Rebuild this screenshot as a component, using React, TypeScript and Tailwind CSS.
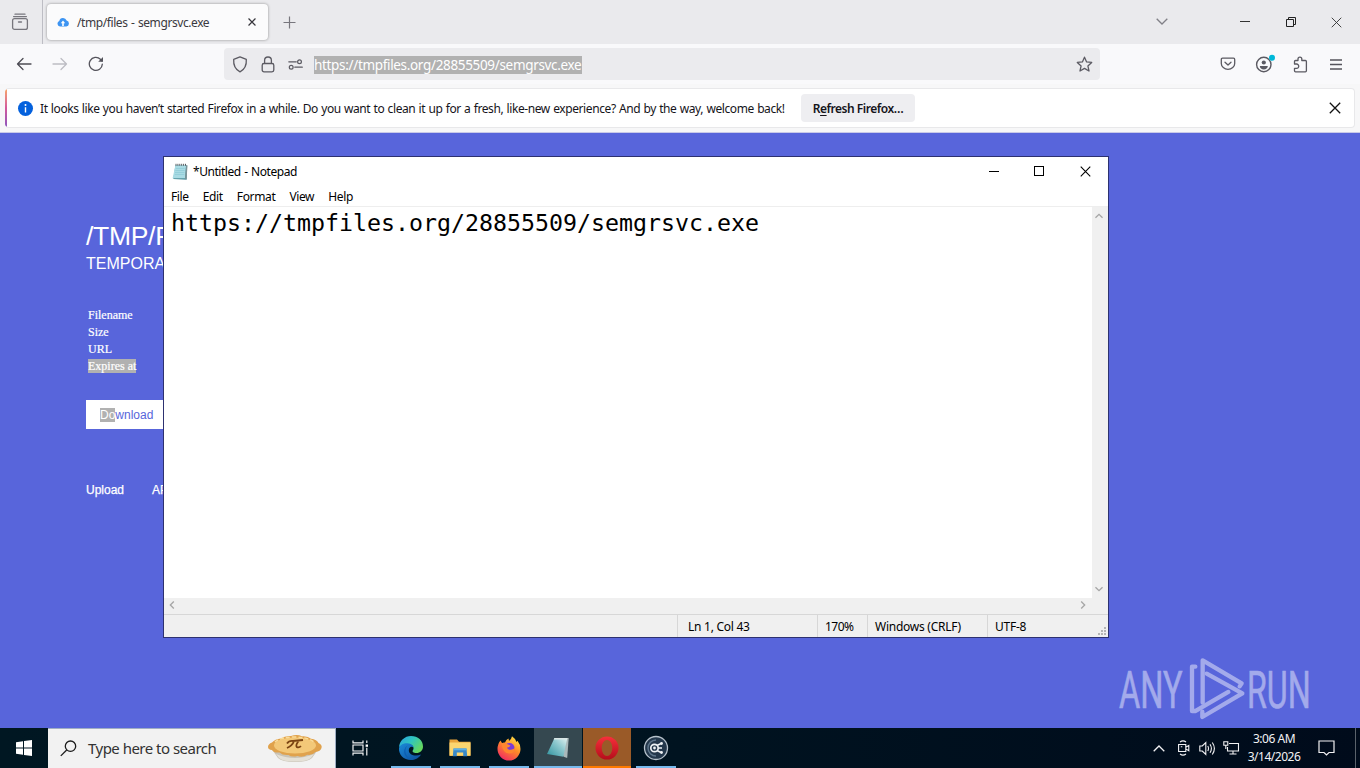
import React from 'react';

type IconProps = {
    className?: string;
};

type TaskProps = {
    children: React.ReactNode;
    className?: string;
    line?: string;
};

const menuItems = ['File', 'Edit', 'Format', 'View', 'Help'];
const fileRows = ['Filename', 'Size', 'URL'];

/* ---------- browser icons ---------- */

const FirefoxView = () => (
    <svg width="18" height="18" viewBox="0 0 18 18" fill="none" stroke="#77767d" strokeWidth="1.3" strokeLinecap="round">
        <path d="M4 1.2h10M2.6 3.6h12.8" />
        <rect x="1.6" y="5.6" width="14.8" height="10.8" rx="2" />
        <path d="M7.5 9h3" />
    </svg>
);

const CloudUp = () => (
    <svg width="12" height="10" viewBox="0 0 12 10">
        <path d="M3 9.5a2.8 2.8 0 0 1-.7-5.4A3.8 3.8 0 0 1 9.6 3.6 3 3 0 0 1 9.3 9.5z" fill="#3d94f2" />
        <path d="M6 3.6 8.2 6.2H6.8V9H5.2V6.2H3.8z" fill="#fff" />
    </svg>
);

const Cross = ({ className }: IconProps) => (
    <svg className={className} viewBox="0 0 12 12" fill="none" stroke="currentColor">
        <path d="M.8.8l10.4 10.4M11.2.8.8 11.2" />
    </svg>
);

const Arrow = ({ className }: IconProps) => (
    <svg className={className} width="16" height="14" viewBox="0 0 16 14" fill="none" stroke="currentColor" strokeWidth="1.3" strokeLinecap="round" strokeLinejoin="round">
        <path d="M15 7H1.5M7 1.5 1.5 7 7 12.5" />
    </svg>
);

const Reload = () => (
    <svg width="16" height="16" viewBox="0 0 16 16" fill="none" stroke="#55545c" strokeWidth="1.3" strokeLinecap="round">
        <path d="M14.3 8.2A6.5 6.5 0 1 1 12.4 3.3L14 5" />
        <path d="M15 1v4.8h-4.8z" fill="#55545c" stroke="none" />
    </svg>
);

const Shield = () => (
    <svg width="16" height="17" viewBox="0 0 16 17" fill="none" stroke="#5b5a62" strokeWidth="1.3" strokeLinejoin="round">
        <path d="M8 .9 14.3 3.3c.4 5.5-1.3 10-6.3 12.6C3 13.3 1.3 8.8 1.7 3.3z" />
    </svg>
);

const Lock = () => (
    <svg width="14" height="17" viewBox="0 0 14 17" fill="none" stroke="#5b5a62" strokeWidth="1.3">
        <path d="M3.6 7.5V4.4a3.4 3.4 0 0 1 6.8 0V7.5" />
        <rect x="1.2" y="7.5" width="11.6" height="8.3" rx="1.8" />
    </svg>
);

const Permissions = () => (
    <svg width="15" height="11" viewBox="0 0 15 11" fill="none" stroke="#5b5a62" strokeWidth="1.2" strokeLinecap="round">
        <path d="M.8 2.8h7.5M6.8 8.2h7.5" />
        <circle cx="11.5" cy="2.8" r="1.9" />
        <circle cx="3.2" cy="8.2" r="1.9" />
    </svg>
);

const Star = () => (
    <svg width="17" height="17" viewBox="0 0 17 17" fill="none" stroke="#5b5a62" strokeWidth="1.3" strokeLinejoin="round">
        <path d="M8.5 1.2 10.6 5.9 15.7 6.4 11.9 9.9 13 15 8.5 12.4 4 15 5.1 9.9 1.3 6.4 6.4 5.9z" />
    </svg>
);

const Pocket = () => (
    <svg width="16" height="14" viewBox="0 0 16 14" fill="none" stroke="#5b5a62" strokeWidth="1.3" strokeLinecap="round" strokeLinejoin="round">
        <path d="M2.5 1.2h11c.7 0 1.2.5 1.2 1.2v4a6.7 5.9 0 0 1-13.4 0v-4c0-.7.5-1.2 1.2-1.2z" />
        <path d="M5 5.2 8 8l3-2.8" />
    </svg>
);

const Account = () => (
    <svg width="20" height="20" viewBox="0 0 20 20">
        <circle cx="8.8" cy="10.5" r="7.2" fill="none" stroke="#5b5a62" strokeWidth="1.4" />
        <circle cx="8.8" cy="8.5" r="2.1" fill="#5b5a62" />
        <path d="M4.8 12.1h8c0 2.3-1.9 3.4-4 3.4s-4-1.1-4-3.4z" fill="#5b5a62" />
        <circle cx="17" cy="3.7" r="3" fill="#00b8d9" />
    </svg>
);

const Extension = () => (
    <svg width="15" height="17" viewBox="0 0 15 17" fill="none" stroke="#5b5a62" strokeWidth="1.3" strokeLinejoin="round">
        <path d="M1.5 8V5.5c0-.6.4-1 1-1H5V3a1.9 1.9 0 0 1 3.8 0v1.5h3.6c.6 0 1 .4 1 1v9.3c0 .6-.4 1-1 1H2.5c-.6 0-1-.4-1-1v-2.5H3.6a1.9 1.9 0 0 0 0-4.3z" />
    </svg>
);

const Chevron = ({ className }: IconProps) => (
    <svg className={className} viewBox="0 0 12 7" fill="none" stroke="currentColor">
        <path d="M.7.8 6 6l5.3-5.2" />
    </svg>
);

const NotepadIcon = () => (
    <svg width="16" height="18" viewBox="0 0 16 18">
        <path d="M3.4 2.5h11.8l-.6 14.3-13.3-.9z" fill="#4e8f9b" />
        <path d="M3.4 2.2h10.700L13 15.2H.6z" fill="#a9dbe4" />
        <path d="M3.8 5.5h9M3.4 7.5h9.200M3 9.5h9.400M2.800 11.5h9.400" stroke="#8ccad6" strokeWidth=".7" />
        <path d="M14.1 2.2h1.3l-.7 14.4-1.7-1.2z" fill="#7c9398" />
        <path d="M4 .8v2M5.900.8v2M7.800.8v2M9.700.8v2M11.600.8v2M13.500.8v2" stroke="#464c50" strokeWidth=".9" />
    </svg>
);

/* ---------- watermark ---------- */

const AnyRun = () => (
    <svg width="204" height="66" viewBox="0 0 204 66" fill="none" opacity=".58">
        <g fill="#d9dcf8" stroke="#d9dcf8" strokeWidth=".6" fontFamily="Roboto, sans-serif" fontSize="52">
            <text transform="translate(2 53) scale(.625 1)">ANY</text>
            <text transform="translate(130 53) scale(.62 1)">RUN</text>
        </g>
        <g transform="translate(63 -5) scale(.3333)" stroke="#d9dcf8" strokeWidth="13" strokeLinejoin="round" strokeLinecap="round">
            <path d="M46 50H36v133h11l98-57" />
            <path d="M68 158V31l117 69-6 9" />
            <path d="M80 71l107 59-120 71v-16" />
        </g>
    </svg>
);

/* ---------- taskbar icons ---------- */

const Pie = () => (
    <svg width="56" height="30" viewBox="0 0 56 30">
        <path d="M4 14 11 24q4 4 17 4t17-4l7-10z" fill="#c9c3b6" />
        <path d="M9 20q19 8 38 0l-3 4q-4 3.5-16 3.5T12 24z" fill="#e4e0d6" />
        <path d="M1 13q0-3 4-4.5Q8 5 14 4.5 18 1.5 24 2q6-2 11 .2 6-.5 9 2.5 6 .8 7.5 4.3 4 2 3 5-1 3.5-6 4-3 3.5-8 2.8-5 3-10 1.2-6 1.5-9-1-6 .5-9-2.5-6 .5-7.5-2.5-4-.5-4-3z" fill="#e0a24c" />
        <ellipse cx="28" cy="11.5" rx="21" ry="8" fill="#f3c878" />
        <path d="M8 8q6-5 19-5 14 0 20 5" stroke="#f9dc9b" strokeWidth="1.5" fill="none" strokeDasharray="4 2" />
        <path d="M20 9.5q2-3 6-2.5l10-1M27 7q-1.5 4.500-7 7M32 6.500q-4 5-2 6.700 2 .8 4-1" stroke="#7a4312" strokeWidth="1.8" fill="none" />
    </svg>
);

const TaskView = () => (
    <svg width="17" height="16" viewBox="0 0 17 16" fill="none" stroke="#f0f2f3" strokeWidth="1.2">
        <path d="M1 .5v2.4h10V.5M1 15.5v-2.4h10v2.4M1 5h10v6H1zM14.8.5v2.5M14.8 7.8v7.7" />
        <path d="M13.6 4.5h2.4v2.3h-2.4z" fill="#fff" stroke="none" />
    </svg>
);

const Edge = () => (
    <svg width="26" height="26" viewBox="0 0 26 26">
        <defs>
            <linearGradient id="edgeTop" x1="0" y1="0" x2="1" y2=".6">
                <stop offset="0" stopColor="#299ee2" />
                <stop offset=".5" stopColor="#2fc5c0" />
                <stop offset="1" stopColor="#66d85d" />
            </linearGradient>
            <linearGradient id="edgeLow" x1="0" y1="0" x2="1" y2="1">
                <stop offset="0" stopColor="#1b8bd9" />
                <stop offset="1" stopColor="#0d4c9a" />
            </linearGradient>
        </defs>
        <path d="M1 12.5A12 12 0 0 1 13 1c7 0 12 4.5 12 10.5 0 4-3 6.5-6.5 6.5-3 0-4.7-1.2-3.6-2.7C17 12.5 14 9 9.5 9 5 9 1.5 11.5 1 12.5z" fill="url(#edgeTop)" />
        <path d="M1 13C2 9.7 5.5 8 9.5 8.2c4 .3 6 2.3 6 4.3-2-1.5-4.7-.3-4.7 2.7 0 4.5 6.2 6.8 12.2 4.3C20.5 23.5 17 25 13 25 5.500 25 .5 19.500 1 13z" fill="url(#edgeLow)" />
        <path d="M9.5 10.5c-4 4-2 12 4 14.2C6 23 3.5 14.5 9.5 10.5z" fill="#0b5eb3" />
    </svg>
);

const Explorer = () => (
    <svg width="22" height="20" viewBox="0 0 22 20">
        <path d="M.5 1.5h7.5l2 2.3h11.5V18H.5z" fill="#e9a43a" />
        <path d="M.5 4.5h21v13H.5z" fill="#fcd670" />
        <path d="M4.5 10.500h13l.7 7.800h-4v-3.800H7.800v3.800h-4z" fill="#3989c9" />
        <path d="M4.500 10.500h13v1.800h-13z" fill="#5eb0e5" />
    </svg>
);

const Firefox = () => (
    <svg width="24" height="25" viewBox="0 0 24 25">
        <defs>
            <linearGradient id="fox" x1=".8" y1="0" x2=".2" y2="1">
                <stop offset="0" stopColor="#ffe546" />
                <stop offset=".45" stopColor="#ff8a28" />
                <stop offset="1" stopColor="#f02466" />
            </linearGradient>
        </defs>
        <path d="M3.5 4.5 5 7l3-.6Q9 3.5 11.5 2.5L12 5q2.5-2 3-4.8Q19 3 19.5 6l1-1.2Q23.5 8.5 23.5 13A11.5 11.5 0 0 1 .5 13Q.5 8 3.5 4.5z" fill="url(#fox)" />
        <circle cx="12.5" cy="12" r="5" fill="#7a3ad6" />
        <path d="M4.5 7.5q3-1.5 5.5.5l3.5 1.5q-1 2-3.5 2 .5 2.5 4 2.3 3-.3 4-2.3 0 6-5.5 6Q5.5 17.5 4.5 7.5z" fill="#ff862f" />
    </svg>
);

const NotepadTask = () => (
    <svg width="24" height="22" viewBox="0 0 24 22">
        <defs>
            <linearGradient id="pad" x1="0" y1="1" x2="1" y2="0">
                <stop offset="0" stopColor="#2d929d" />
                <stop offset=".6" stopColor="#8fc9cf" />
                <stop offset="1" stopColor="#e4f2f1" />
            </linearGradient>
        </defs>
        <path d="M8.5 1h14.2l-1.5 20-3.5-1.2z" fill="#a9b8ba" />
        <path d="M8.5 1h12.8l-4 18.8L1 17z" fill="url(#pad)" />
        <path d="M8.5 1h12.8l-.3 1.5H7.7z" fill="#d9e5e5" />
    </svg>
);

const Opera = () => (
    <svg width="24" height="24" viewBox="0 0 24 24">
        <defs>
            <linearGradient id="opera" x1="0" y1="0" x2="0" y2="1">
                <stop offset="0" stopColor="#f6303b" />
                <stop offset="1" stopColor="#b40d1a" />
            </linearGradient>
        </defs>
        <path fillRule="evenodd" d="M12 .5a11.5 11.5 0 1 1 0 23 11.5 11.5 0 0 1 0-23zM12 4a5.300 8 0 1 0 0 16 5.300 8 0 0 0 0-16z" fill="url(#opera)" />
    </svg>
);

const RoundApp = () => (
    <svg width="26" height="26" viewBox="0 0 26 26" fill="none">
        <circle cx="13" cy="13" r="11.5" fill="#24384c" stroke="#b7c2cc" strokeWidth="1.3" />
        <path d="M13 5a8 8 0 0 0-8 8 8 8 0 0 0 8 8" stroke="#5d748a" strokeWidth="1.5" />
        <circle cx="11.5" cy="13" r="3.7" stroke="#eef2f5" strokeWidth="1.7" />
        <circle cx="11.5" cy="13" r="1.4" fill="#eef2f5" />
        <path d="M14 10.5 18 8.5M14 15.5l4 2M15.5 13H19" stroke="#eef2f5" strokeWidth="1.4" />
        <circle cx="18.5" cy="8.5" r="1.4" fill="#eef2f5" />
        <circle cx="18.5" cy="17.5" r="1.4" fill="#eef2f5" />
    </svg>
);

const Task = ({ children, className = 'w-12', line = 'bg-[#76b9ed]' }: TaskProps) => (
    <div className={`flex h-10 flex-col items-center ${className}`}>
        <div className="flex h-[38px] items-center pt-[2px]">{children}</div>
        <div className={`h-[2px] w-full ${line}`}></div>
    </div>
);

/* ---------- sections ---------- */

const TabBar = () => (
    <div className="flex h-11 shrink-0 bg-[#eaeaed] text-[#5b5b66]">
        <div className="flex w-[43px] items-center border-r border-[#bdbdc4] pl-[11px]">
            <FirefoxView />
        </div>
        <div className="mt-1 ml-1 flex h-9 w-[221px] items-center rounded bg-[#fbfbfc] pl-[10px] shadow-[0_0_3px_rgba(0,0,0,0.4)]">
            <CloudUp />
            <span className="mt-[2px] ml-[8px] w-[171px] text-[12px] tracking-[-0.42px] whitespace-nowrap text-[#3a3940] [word-spacing:0.8px]">/tmp/files - semgrsvc.exe</span>
            <Cross className="h-2 w-2 stroke-[1.8] text-[#36353c]" />
        </div>
        <svg className="mt-4 ml-[15px]" width="13" height="13" viewBox="0 0 13 13" stroke="#77767d" strokeWidth="1.2">
            <path d="M6.5.5v12M.5 6.5h12" />
        </svg>
        <Chevron className="mt-[18px] ml-[860px] h-[7px] w-3 stroke-[1.3] text-[#818087]" />
        <div className="mt-[21px] ml-[72px] h-px w-[10px] bg-[#333]"></div>
        <svg className="mt-[17px] ml-9" width="11" height="11" viewBox="0 0 11 11" fill="none" stroke="#222">
            <path d="M.5 2.5h7v7h-7zM2.5 2.5v-2h7v7h-2" />
        </svg>
        <Cross className="mt-[17px] ml-[34px] h-[11px] w-[11px] text-[#333]" />
    </div>
);

const NavBar = () => (
    <div className="flex h-10 shrink-0 items-center bg-[#f9f9fb]">
        <Arrow className="ml-4 text-[#4d4c54]" />
        <Arrow className="ml-5 rotate-180 text-[#bdbdc3]" />
        <span className="ml-5">
            <Reload />
        </span>
        <div className="ml-[120px] flex h-8 w-[876px] items-center rounded bg-[#ebebee] pl-2">
            <Shield />
            <span className="ml-[13px]"><Lock /></span>
            <span className="ml-[13px]"><Permissions /></span>
            <span className="mt-[1px] ml-[11px] h-[18px] w-[268px] bg-[#b1b1b1] text-[13.5px] leading-[19px] tracking-[-0.33px] whitespace-nowrap text-white">https://tmpfiles.org/28855509/semgrsvc.exe</span>
            <span className="mr-[7px] ml-auto"><Star /></span>
        </div>
        <span className="ml-[120px]"><Pocket /></span>
        <span className="ml-[19px]"><Account /></span>
        <span className="ml-[18px]"><Extension /></span>
        <svg className="ml-[22px]" width="12" height="11" viewBox="0 0 12 11" stroke="#55545c" strokeWidth="1.3">
            <path d="M0 1h12M0 5.5h12M0 10h12" />
        </svg>
    </div>
);

const Notification = () => (
    <div className="h-[49px] shrink-0 border-b border-[#c9cae8] bg-[#f7f7f8] px-[5px] pt-[4px]">
        <div className="flex h-10 items-center overflow-hidden rounded border border-l-0 border-[#e8e8ea] bg-white">
            <div className="h-full w-[2px] bg-gradient-to-b from-[#f6a465] via-[#d3589b] to-[#8d54bd]"></div>
            <div className="ml-[11px] flex h-[15px] w-[15px] items-center justify-center rounded-full bg-[#0461dd]">
                <svg width="3" height="9" viewBox="0 0 3 9" fill="#fff">
                    <circle cx="1.5" cy="1.1" r="1" />
                    <path d="M.8 3.2h1.4v5.3H.8z" />
                </svg>
            </div>
            <span className="mt-[2px] ml-[7px] w-[761px] text-[12px] tracking-[-0.4px] whitespace-nowrap text-[#15141a] [word-spacing:0.52px]">
                It looks like you haven’t started Firefox in a while. Do you want to clean it up for a fresh, like-new experience? And by the way, welcome back!
            </span>
            <button className="h-[28px] w-[114px] rounded-sm bg-[#eeeef1] pt-px text-[12px] font-semibold tracking-[-0.48px] whitespace-nowrap text-[#15141a]">
                R<u className="underline-offset-2">e</u>fresh Firefox…
            </button>
            <Cross className="mr-[13px] ml-auto h-3 w-3 stroke-[1.3] text-[#111]" />
        </div>
    </div>
);

const Site = () => (
    <div className="flex flex-1 flex-col bg-[#5865db] pl-[86px] font-['Liberation_Sans',Arial,sans-serif] text-white">
        <h1 className="mt-[87px] text-[26.5px] leading-8 tracking-[-0.3px]">/TMP/FILES</h1>
        <h2 className="mt-px text-[16px] leading-[22px]">TEMPORARY FILES</h2>
        <div className="mt-8 pl-[2px] font-['Liberation_Serif','Times_New_Roman',serif] text-[12px] leading-[17px] [-webkit-text-stroke:0.2px_white]">
            {fileRows.map((row) => (
                <div key={row}>{row}</div>
            ))}
            <div className="flex h-[17px] items-start pt-px">
                <span className="h-[14px] bg-[#b1b1b1] leading-[14px]">Expires at</span>
            </div>
        </div>
        <div className="mt-[25px] flex h-[29px] w-[96px] items-center bg-white pl-[14px] text-[12px] text-[#5865db]">
            <span className="bg-[#b1b1b1] leading-[14px] text-white">Do</span>wnload
        </div>
        <div className="mt-[53px] flex gap-7 text-[12px] leading-4 [-webkit-text-stroke:0.25px_white]">
            <span>Upload</span>
            <span>API</span>
        </div>
    </div>
);

const Notepad = () => (
    <div className="absolute top-[156px] left-[163px] flex h-[482px] w-[946px] flex-col border border-[#2d3170] bg-white text-[12px] text-black">
        <div className="flex h-[30px] shrink-0 items-center pl-2">
            <NotepadIcon />
            <span className="ml-[5px] tracking-[-0.45px] [word-spacing:0.8px]">*Untitled - Notepad</span>
            <div className="ml-auto flex items-center pr-[17px] pb-[2px]">
                <div className="h-px w-[10px] bg-black"></div>
                <div className="ml-[35px] h-[10px] w-[10px] border border-black"></div>
                <Cross className="ml-9 h-[11px] w-[11px] stroke-[1.2] text-black" />
            </div>
        </div>
        <div className="flex h-5 shrink-0 items-center gap-[14px] border-b border-[#eee] pl-[7px] tracking-[-0.36px]">
            {menuItems.map((item) => (
                <span key={item}>{item}</span>
            ))}
        </div>
        <div className="flex flex-1">
            <div className="flex-1 pl-[7px] font-['DejaVu_Sans_Mono',monospace] text-[23.25px] leading-8 whitespace-nowrap">
                https://tmpfiles.org/28855509/semgrsvc.exe
            </div>
            <div className="flex w-4 flex-col items-center justify-between bg-[#f0f0f0] py-[6px] pr-[2px] text-[#a6a6a6]">
                <Chevron className="h-[6px] w-[8px] rotate-180 stroke-[2]" />
                <Chevron className="h-[6px] w-[8px] stroke-[2]" />
            </div>
        </div>
        <div className="flex h-4 shrink-0 items-center justify-between bg-[#f0f0f0] pr-[21px] pb-[2px] pl-1 text-[#a6a6a6]">
            <Chevron className="h-[6px] w-[8px] rotate-90 stroke-[2]" />
            <Chevron className="h-[6px] w-[8px] -rotate-90 stroke-[2]" />
        </div>
        <div className="flex h-[23px] shrink-0 border-t border-[#d7d7d7] bg-[#f0f0f0] leading-[23px] tracking-[-0.26px] whitespace-nowrap">
            <div className="w-[514px] border-r border-[#d7d7d7]"></div>
            <div className="w-[140px] border-r border-[#d7d7d7] pl-[10px]">Ln 1, Col 43</div>
            <div className="w-[50px] border-r border-[#d7d7d7] pl-[7px] tracking-[-0.5px]">170%</div>
            <div className="w-[120px] border-r border-[#d7d7d7] pl-[7px]">Windows (CRLF)</div>
            <div className="flex-1 pl-[7px]">UTF-8</div>
            <svg className="mt-[12px] mr-[2px]" width="8" height="8" viewBox="0 0 8 8" fill="#b5b5b5">
                <path d="M6 0h2v2H6zM3 3h2v2H3zM6 3h2v2H6zM0 6h2v2H0zM3 6h2v2H3zM6 6h2v2H6z" />
            </svg>
        </div>
    </div>
);

const Tray = () => (
    <div className="ml-auto flex items-center text-[#f2f2f4]">
        <Chevron className="h-[7px] w-3 rotate-180 stroke-[1.3]" />
        <svg className="ml-[12px]" width="14" height="16" viewBox="0 0 14 16" fill="none" stroke="currentColor" strokeWidth="1.1">
            <path d="M3 2Q6-.2 9 2M3 14q3 2.2 6 0M1.6 4.5h7.2v7H1.6zM8.8 7.2l3-1.8v5.3l-3-1.8M3.8 6.8h1.5" />
        </svg>
        <svg className="ml-[8px]" width="17" height="15" viewBox="0 0 17 15" fill="none" stroke="currentColor" strokeWidth="1.1">
            <path d="M.8 5h2.5l3.5-3.5v12L3.3 10H.8zM8.8 5q1.4 2.5 0 5M11 3.2q2.8 4.3 0 8.6M13.3 1.5q4.2 6 0 12" />
        </svg>
        <svg className="ml-[7px]" width="17" height="14" viewBox="0 0 17 14" fill="none" stroke="currentColor" strokeWidth="1.1">
            <path d="M6 2.5h9.5v7.5H4.5V6M10 10v3M6.5 13h7M.8.8h4v3.5h-4zM2.8 4.3V8" />
        </svg>
        <div className="ml-[6px] w-[56px] text-center text-[12px] leading-[18px] tracking-[-0.48px] whitespace-nowrap">
            <div>3:06 AM</div>
            <div>3/14/2026</div>
        </div>
        <svg className="ml-[16px]" width="17" height="16" viewBox="0 0 17 16" fill="none" stroke="currentColor" strokeWidth="1.2">
            <path d="M1 1h15v11.5h-5L8.5 15 6 12.5H1z" />
        </svg>
        <div className="ml-[20px] h-10 w-[5px] border-l border-[#5a626b]"></div>
    </div>
);

const Taskbar = () => (
    <div className="flex h-10 shrink-0 bg-gradient-to-r from-[#001722] via-[#001320] to-[#000b1b]">
        <div className="flex w-12 items-center justify-center">
            <svg width="16" height="16" viewBox="0 0 16 16" fill="#fff">
                <path d="M0 2.3 7 1.3v6.2H0zM8 1.1 16 0v7.5H8zM0 8.5h7v6.2l-7-1zM8 8.5h8V16l-8-1.1z" />
            </svg>
        </div>
        <div className="flex w-[288px] items-center border-t border-r border-[#9faec4] bg-[#f2f2f2] pl-3">
            <svg width="17" height="17" viewBox="0 0 17 17" fill="none" stroke="#1c1c1c" strokeWidth="1.3">
                <circle cx="10.5" cy="6.2" r="5.2" />
                <path d="M6.7 10 .8 15.9" />
            </svg>
            <span className="ml-[11px] w-[179px] text-[15px] tracking-[-0.52px] whitespace-nowrap text-[#333]">Type here to search</span>
            <Pie />
        </div>
        <div className="flex w-[55px] items-center justify-center pr-[6px]">
            <TaskView />
        </div>
        <div className="flex gap-[9px]">
            <Task className="w-10"><Edge /></Task>
            <Task className="w-10"><Explorer /></Task>
            <Task className="w-10"><Firefox /></Task>
        </div>
        <Task className="ml-[5px] w-12 bg-[#354850]"><NotepadTask /></Task>
        <Task className="ml-px w-12 bg-[#9a5a28]" line="bg-[#ff7900]"><Opera /></Task>
        <Task className="ml-[5px] w-10"><RoundApp /></Task>
        <Tray />
    </div>
);

const App = () => {
    return (
        <div className="relative flex h-[768px] w-[1360px] flex-col overflow-hidden font-['Noto_Sans','Open_Sans',sans-serif]">
            <TabBar />
            <NavBar />
            <Notification />
            <Site />
            <Taskbar />
            <Notepad />
            <div className="absolute top-[655px] left-[1117px]">
                <AnyRun />
            </div>
        </div>
    );
};

export default App;
